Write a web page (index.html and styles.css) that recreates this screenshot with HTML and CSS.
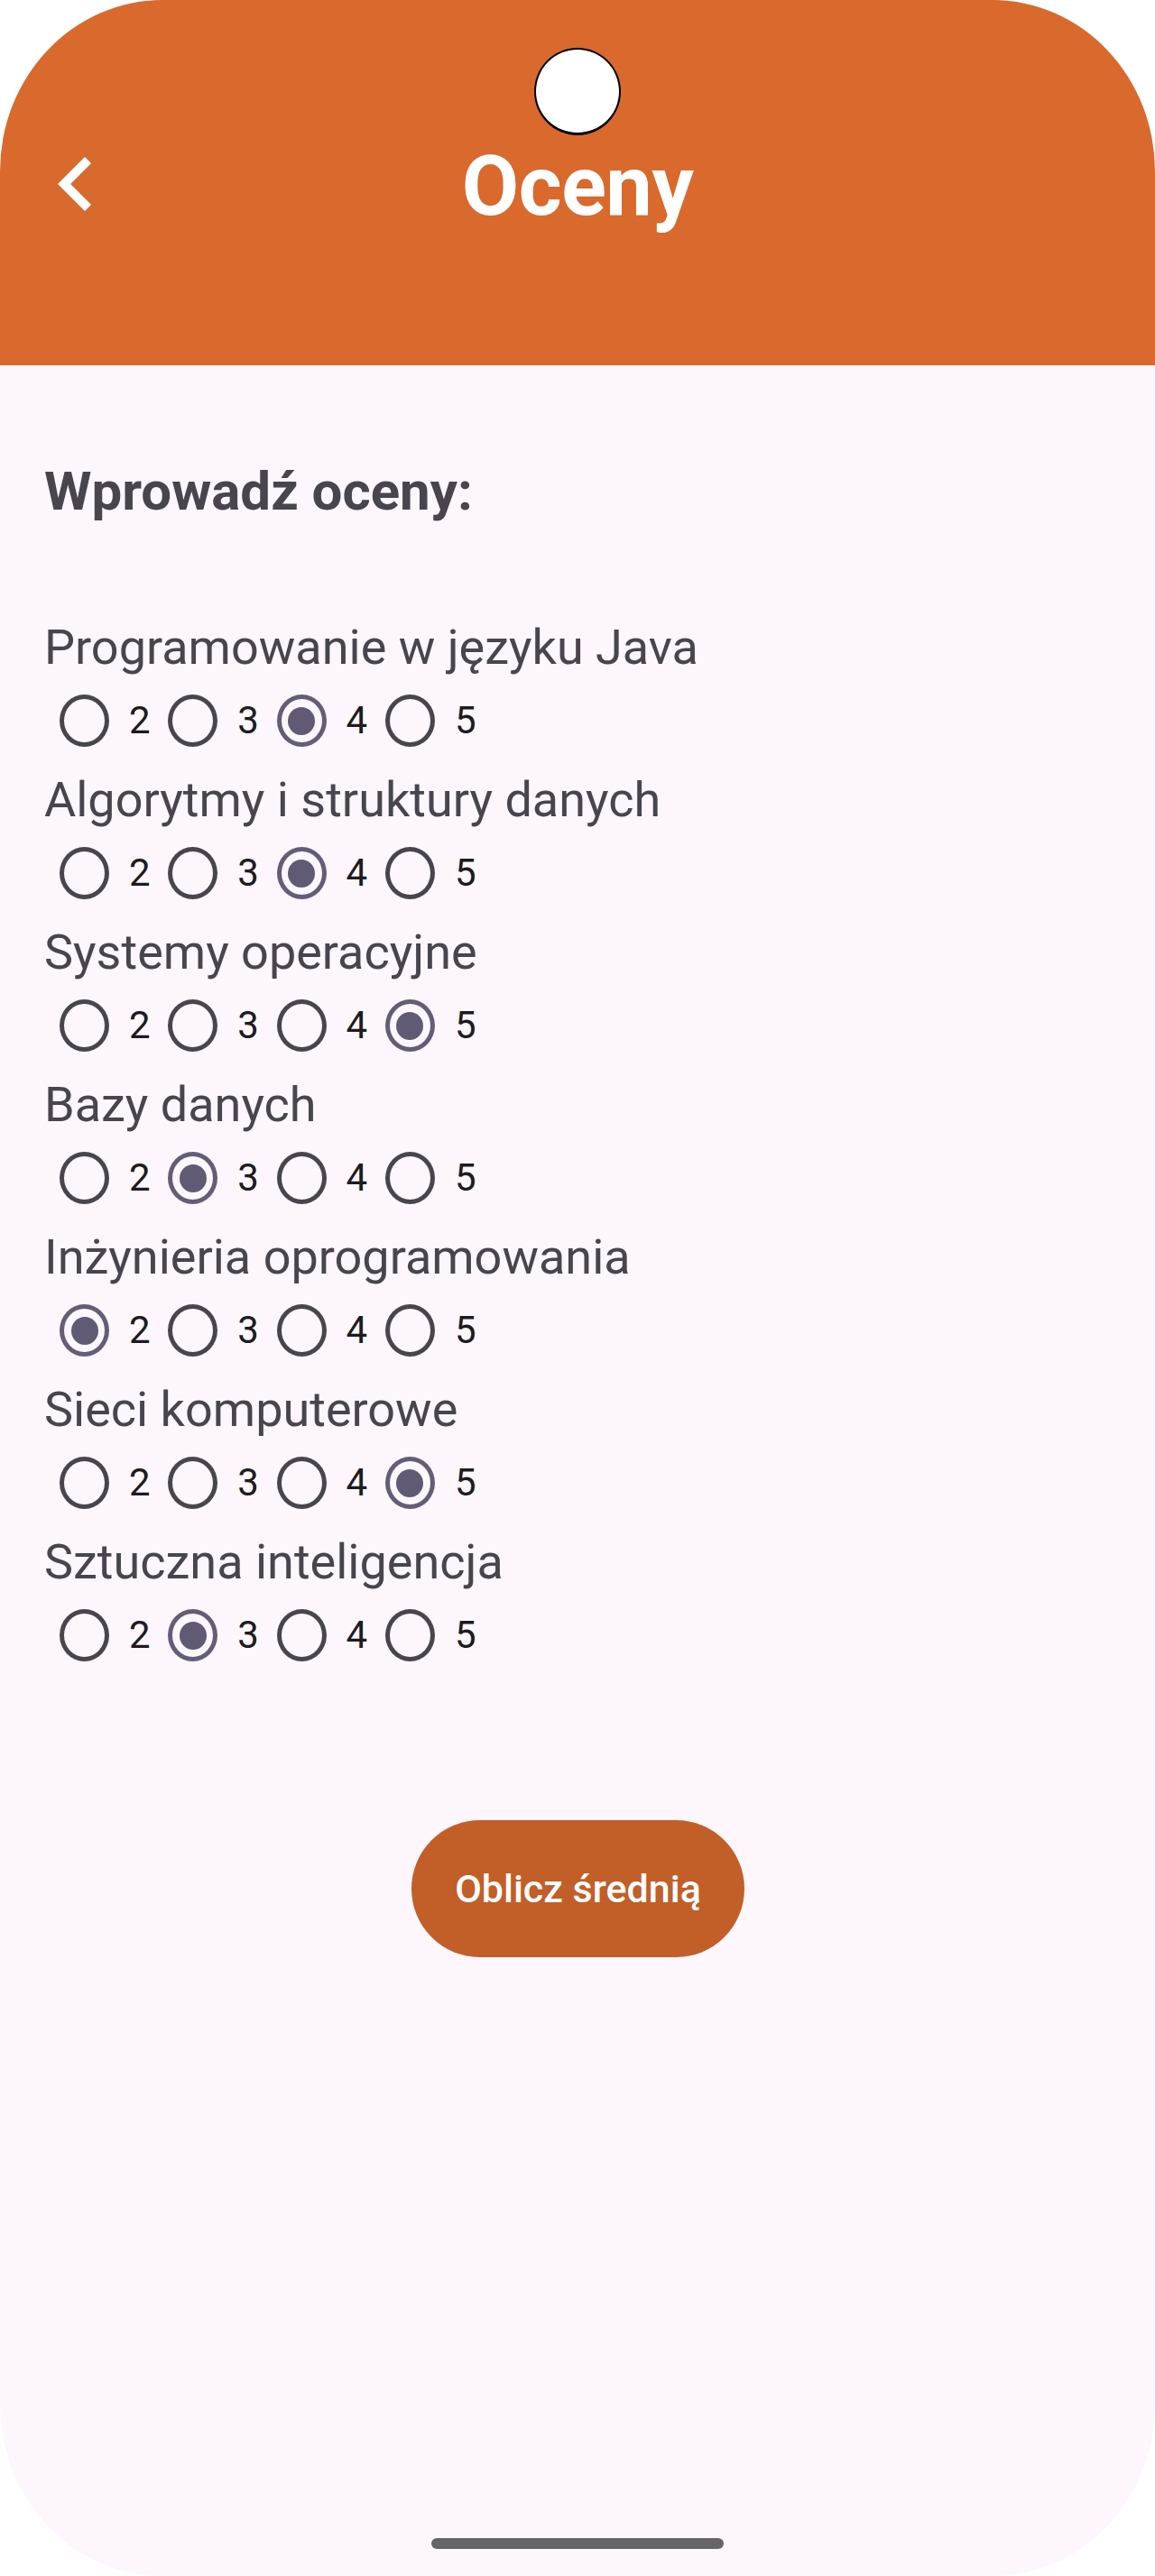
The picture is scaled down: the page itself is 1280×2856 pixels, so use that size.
FILE: index.html
```html
<!DOCTYPE html>
<html lang="pl">
<head>
<meta charset="utf-8">
<title>Oceny</title>
<link rel="stylesheet" href="styles.css">
</head>
<body>
<div class="screen">
  <div class="camera"></div>
  <header class="appbar">
    <div class="appbar-left">
      <svg class="back" viewBox="0 0 24 24" width="120" height="120" aria-hidden="true"><path d="M15.41 7.41L14 6l-6 6 6 6 1.41-1.41L10.83 12z" fill="#ffffff"/></svg>
    </div>
    <h1 class="title">Oceny</h1>
    <div class="appbar-right"></div>
  </header>
  <main class="content">
    <h2 class="heading">Wprowadź oceny:</h2>
    <div class="subjects">
      <section class="subject">
        <div class="subject-name">Programowanie w języku Java</div>
        <div class="options">
          <div class="opt"><span class="radio"></span><span class="num">2</span></div>
          <div class="opt"><span class="radio"></span><span class="num">3</span></div>
          <div class="opt"><span class="radio checked"></span><span class="num">4</span></div>
          <div class="opt"><span class="radio"></span><span class="num">5</span></div>
        </div>
      </section>
      <section class="subject">
        <div class="subject-name">Algorytmy i struktury danych</div>
        <div class="options">
          <div class="opt"><span class="radio"></span><span class="num">2</span></div>
          <div class="opt"><span class="radio"></span><span class="num">3</span></div>
          <div class="opt"><span class="radio checked"></span><span class="num">4</span></div>
          <div class="opt"><span class="radio"></span><span class="num">5</span></div>
        </div>
      </section>
      <section class="subject">
        <div class="subject-name">Systemy operacyjne</div>
        <div class="options">
          <div class="opt"><span class="radio"></span><span class="num">2</span></div>
          <div class="opt"><span class="radio"></span><span class="num">3</span></div>
          <div class="opt"><span class="radio"></span><span class="num">4</span></div>
          <div class="opt"><span class="radio checked"></span><span class="num">5</span></div>
        </div>
      </section>
      <section class="subject">
        <div class="subject-name">Bazy danych</div>
        <div class="options">
          <div class="opt"><span class="radio"></span><span class="num">2</span></div>
          <div class="opt"><span class="radio checked"></span><span class="num">3</span></div>
          <div class="opt"><span class="radio"></span><span class="num">4</span></div>
          <div class="opt"><span class="radio"></span><span class="num">5</span></div>
        </div>
      </section>
      <section class="subject">
        <div class="subject-name">Inżynieria oprogramowania</div>
        <div class="options">
          <div class="opt"><span class="radio checked"></span><span class="num">2</span></div>
          <div class="opt"><span class="radio"></span><span class="num">3</span></div>
          <div class="opt"><span class="radio"></span><span class="num">4</span></div>
          <div class="opt"><span class="radio"></span><span class="num">5</span></div>
        </div>
      </section>
      <section class="subject">
        <div class="subject-name">Sieci komputerowe</div>
        <div class="options">
          <div class="opt"><span class="radio"></span><span class="num">2</span></div>
          <div class="opt"><span class="radio"></span><span class="num">3</span></div>
          <div class="opt"><span class="radio"></span><span class="num">4</span></div>
          <div class="opt"><span class="radio checked"></span><span class="num">5</span></div>
        </div>
      </section>
      <section class="subject">
        <div class="subject-name">Sztuczna inteligencja</div>
        <div class="options">
          <div class="opt"><span class="radio"></span><span class="num">2</span></div>
          <div class="opt"><span class="radio checked"></span><span class="num">3</span></div>
          <div class="opt"><span class="radio"></span><span class="num">4</span></div>
          <div class="opt"><span class="radio"></span><span class="num">5</span></div>
        </div>
      </section>
    </div>
    <div class="actions">
      <button class="btn" type="button">Oblicz średnią</button>
    </div>
  </main>
  <footer class="navbar">
    <div class="home-indicator"></div>
  </footer>
</div>
</body>
</html>
```

FILE: styles.css
```css
html, body {
  margin: 0;
  padding: 0;
  background: #ffffff;
}

body {
  font-family: Roboto, "Noto Sans", "Liberation Sans", sans-serif;
}

.screen {
  position: relative;
  width: 1280px;
  height: 2856px;
  background: #fdf7fd;
  border-radius: 180px / 190px;
  overflow: hidden;
  display: flex;
  flex-direction: column;
}

.camera {
  position: absolute;
  left: 592px;
  top: 53px;
  width: 92px;
  height: 92px;
  border-radius: 50%;
  background: #ffffff;
  border: 2px solid #000000;
  border-bottom-width: 3px;
}

.appbar {
  height: 405px;
  box-sizing: border-box;
  padding-top: 144px;
  background: #d9692c;
  display: grid;
  grid-template-columns: 1fr auto 1fr;
  align-items: start;
  flex: none;
}

.appbar-left {
  height: 120px;
  padding-left: 24px;
  display: flex;
  align-items: center;
}

.back {
  display: block;
}

.title {
  margin: 0;
  height: 120px;
  line-height: 120px;
  padding-top: 3px;
  box-sizing: border-box;
  color: #ffffff;
  font-size: 92px;
  font-weight: 700;
  letter-spacing: -0.5px;
}

.content {
  flex: 1;
  padding: 103px 0 0 49px;
}

.heading {
  margin: 0;
  font-size: 60px;
  line-height: 74px;
  font-weight: 700;
  color: #49454f;
}

.subjects {
  margin-top: 104px;
  display: flex;
  flex-direction: column;
}

.subject-name {
  font-size: 54px;
  line-height: 63px;
  color: #49454f;
}

.options {
  display: flex;
  height: 106px;
  align-items: center;
  padding-left: 17px;
  padding-bottom: 6px;
  box-sizing: border-box;
}

.opt {
  display: flex;
  align-items: center;
  width: 120.3px;
  flex: none;
}

.radio {
  width: 55px;
  height: 58px;
  box-sizing: border-box;
  border: 5.6px solid #49454f;
  border-radius: 50%;
  display: flex;
  align-items: center;
  justify-content: center;
  flex: none;
}

.radio.checked {
  border-color: #655d76;
}

.radio.checked::after {
  content: "";
  width: 30px;
  height: 31px;
  border-radius: 50%;
  background: #615a74;
}

.num {
  margin-left: 22px;
  font-size: 42px;
  line-height: 50px;
  color: #1d1b20;
}

.actions {
  display: flex;
  justify-content: center;
  margin-top: 149px;
  margin-left: -49px;
}

.btn {
  width: 369px;
  height: 152px;
  border: none;
  border-radius: 76px;
  background: #c25e28;
  color: #ffffff;
  font-family: Roboto, "Noto Sans", "Liberation Sans", sans-serif;
  font-size: 43px;
  font-weight: 500;
  padding: 0;
  margin-left: 1px;
}

.navbar {
  height: 72px;
  flex: none;
  display: flex;
  align-items: center;
  justify-content: center;
}

.home-indicator {
  width: 324px;
  height: 12px;
  border-radius: 6px;
  background: #676468;
}
```
